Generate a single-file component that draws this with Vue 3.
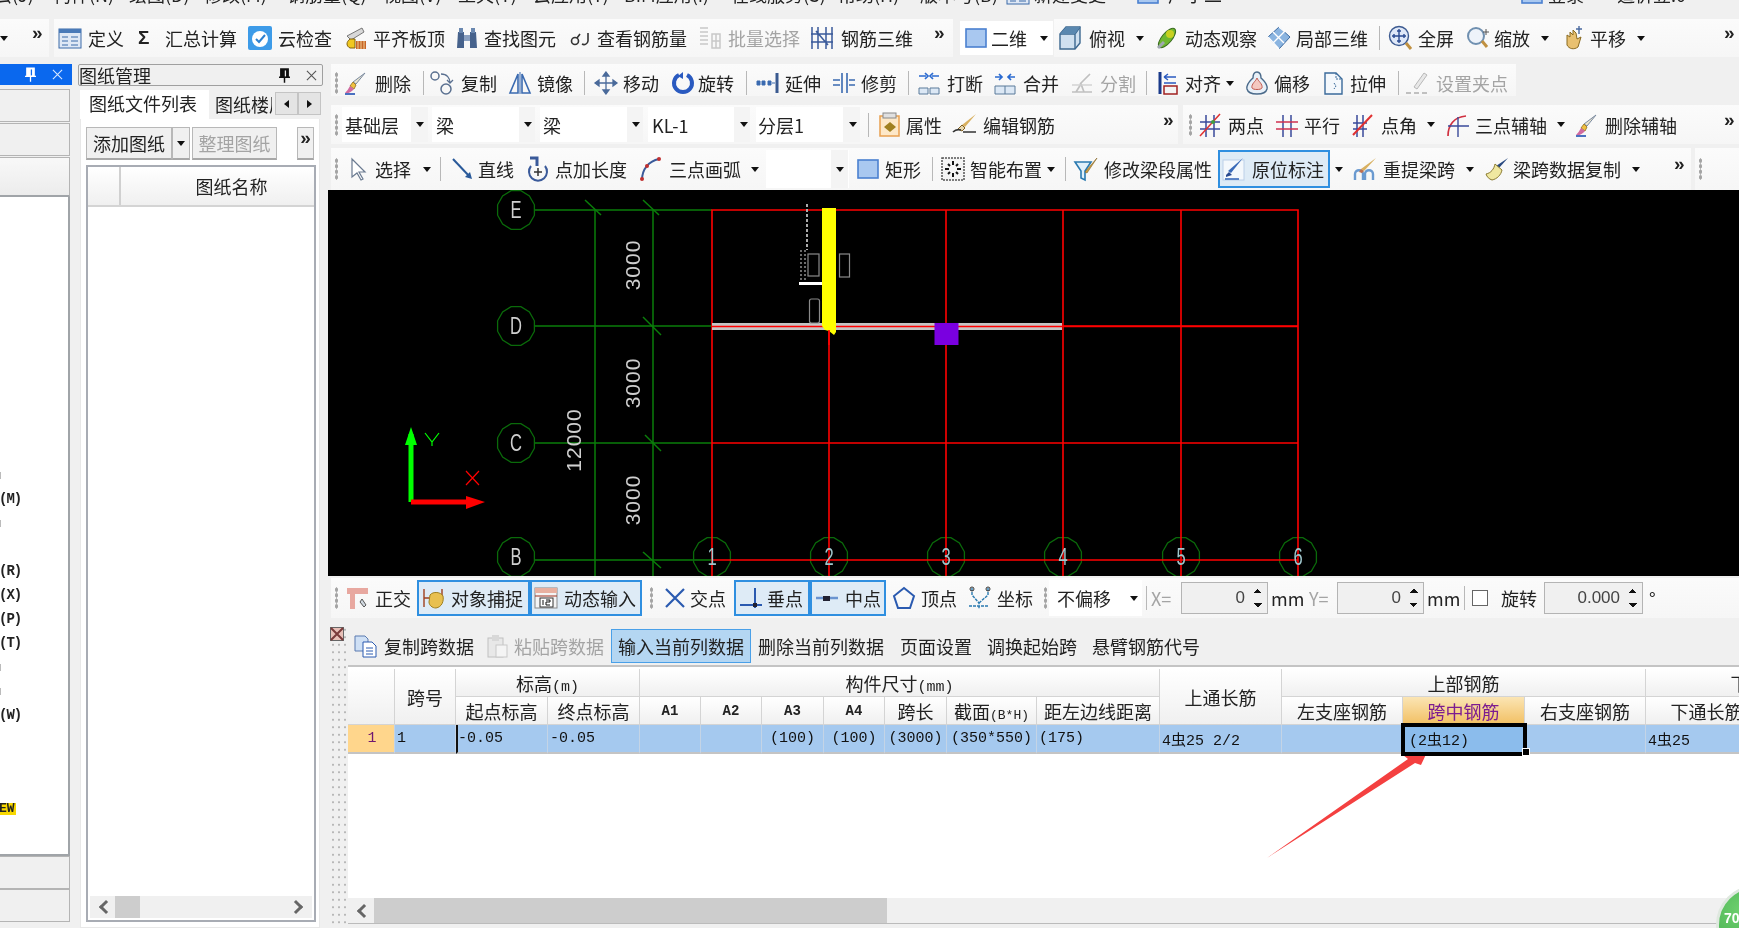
<script setup>
import { h } from 'vue'

const brush = '<path d="M21 2 L12 13 L9 11 Z" fill="#e8e4d0" stroke="#7a8aa0"/><path d="M9 11 L12 14 L10 18 L6 15 Z" fill="#f0c040" stroke="#a08030"/><path d="M6 15 L10 18 Q6 23 1 22 Q4 19 6 15Z" fill="#d06aa0"/><path d="M1 23h10" stroke="#4a70c0" stroke-width="2"/>'
const I = {
  def: '<rect x="1" y="3" width="22" height="19" fill="#dfe8f5" stroke="#3b6aa8"/><rect x="1" y="3" width="22" height="4" fill="#4a7ab8"/><path d="M4 11h6M4 15h6M4 19h6M13 11h7M13 15h7M13 19h7" stroke="#3b6aa8"/>',
  cloud: '<rect x="0" y="0" width="24" height="24" rx="2" fill="#3d9be8"/><circle cx="12" cy="13" r="8" fill="#fff"/><path d="M8 13l3 3 6-7" fill="none" stroke="#2c80d0" stroke-width="2"/>',
  align: '<path d="M3 10 L18 2 L20 6 L7 14Z" fill="#d8d8d8" stroke="#777"/><path d="M6 13c-4 3-4 7 0 9h5v-9z" fill="#f0c820" stroke="#806010"/><path d="M12 15h10v8H12z" fill="#c86428"/><path d="M14 15v8M17 15v8M20 15v8" stroke="#f0d090"/>',
  find: '<path d="M3 6h6v16H2zM15 6h6l1 16h-7z" fill="#46628c"/><rect x="9" y="9" width="6" height="6" fill="#8aa0c0"/><rect x="4" y="2" width="4" height="5" fill="#6a88b0"/><rect x="16" y="2" width="4" height="5" fill="#6a88b0"/>',
  see: '<circle cx="6" cy="15" r="3.5" fill="none" stroke="#333" stroke-width="1.6"/><path d="M8 12L11 8M19 7v8a4 4 0 0 1-6 3" fill="none" stroke="#333" stroke-width="1.6"/>',
  batch: '<path d="M2 2h8M2 6h8M2 10h8M2 14h8M2 18h8M14 8h8v14h-8zM14 15h8M18 8v14" fill="none" stroke="#c8c8c8" stroke-width="1.5"/>',
  rebar: '<path d="M2 1v22M8 1v22M16 1v22M22 1v22M1 8h22M1 16h22M6 5l12 14" fill="none" stroke="#3a5a9a" stroke-width="1.5"/>',
  sq: '<rect x="2" y="3" width="20" height="18" fill="#a9c8f0" stroke="#4a80d0" stroke-width="1.6"/>',
  top: '<path d="M2 8L8 1h14v16l-5 6H2z" fill="#cfe0f0" stroke="#3c6890" stroke-width="1.4"/><path d="M2 8h15v15M17 8l5-7" fill="none" stroke="#3c6890" stroke-width="1.4"/><path d="M8 1h14l-5 7H2z" fill="#5a88b0"/>',
  orbit: '<ellipse cx="12" cy="12" rx="12" ry="5" transform="rotate(-50 12 12)" fill="#70b830" stroke="#3a6a20"/><circle cx="15" cy="8" r="4" fill="#c8d020"/><path d="M3 22l6-6" stroke="#a0a8b0" stroke-width="3"/>',
  local: '<path d="M12 1L23 11 12 23 1 11z" fill="#8ab4e0" stroke="#3c6aa0"/><path d="M6 6l11 11M12 1l6 5M6 17L18 5M1 11l11 12" stroke="#fff" stroke-width="1.4"/>',
  full: '<circle cx="11" cy="10" r="9.5" fill="#dfe8f8" stroke="#3c5a90" stroke-width="1.4"/><path d="M11 3v14M4 10h14M9 5h4M9 15h4M6 8v4M16 8v4" stroke="#2a4a90" stroke-width="1.4"/><path d="M18 17l5 6" stroke="#c09040" stroke-width="3"/>',
  zoom: '<circle cx="9" cy="10" r="8" fill="#eef3fa" stroke="#7090b0" stroke-width="2"/><path d="M15 15l5 6" stroke="#c09040" stroke-width="3"/><path d="M19 3v6M16 6h6" stroke="#555"/>',
  pan: '<path d="M5 13V9l3 2V6l3 3V4l3 3 1 6 4-2-3 10c-4 3-9 2-11-2z" fill="#e8c070" stroke="#8a6a20"/><path d="M17 0v8M14 3h6" stroke="#4a6aa0" stroke-width="1.4"/>',
  del: brush,
  copy: '<circle cx="5" cy="5" r="4" fill="none" stroke="#5a7090" stroke-width="1.5"/><circle cx="16" cy="18" r="5" fill="none" stroke="#5a7090" stroke-width="1.5"/><path d="M11 3c6 0 9 4 9 9M17 9l3 3 3-3" fill="none" stroke="#5a7090" stroke-width="1.3"/>',
  mirror: '<path d="M10 3L2 22h8zM14 3l8 19h-8z" fill="none" stroke="#3a6ab0" stroke-width="1.6"/><path d="M12 1v22" stroke="#3a6ab0"/>',
  move: '<path d="M12 1v22M1 12h22M12 1l-3 4h6zM12 23l-3-4h6zM1 12l4-3v6zM23 12l-4-3v6z" fill="#4a6a9a" stroke="#4a6a9a" stroke-width="1.3"/>',
  rot: '<path d="M8 4a9 9 0 1 0 8 0" fill="none" stroke="#2a5ac0" stroke-width="4"/><path d="M12 1v7l-5-3z" fill="#2a5ac0"/>',
  ext: '<path d="M1 10h3v4H1zM6 10h3v4H6zM12 10h3v4h-3zM16 12h3" fill="#3a6ab0" stroke="#3a6ab0"/><path d="M21 2v20" stroke="#3a5a90" stroke-width="3"/>',
  trim: '<path d="M10 2v20M15 2v20" stroke="#3a6ab0" stroke-width="1.6"/><path d="M1 9h7M1 14h7M17 9h6M17 14h6" stroke="#3a6ab0" stroke-width="1.6"/>',
  brk: '<path d="M2 17h9v6H2zM13 17h9v6h-9z" fill="#dce8f5" stroke="#5a7a9a"/><path d="M2 5h7M15 5h7M8 2l3 3-3 3M16 2l-3 3 3 3" fill="none" stroke="#2a6ad0" stroke-width="1.7"/>',
  merge: '<path d="M2 15h20v8H2zM12 15v8" fill="#dce8f5" stroke="#5a7a9a"/><path d="M2 6h7M15 6h7M6 3l3 3-3 3M18 3l-3 3 3 3" fill="none" stroke="#2a6ad0" stroke-width="1.7"/>',
  split: '<path d="M2 21h20M6 21l5-8 3 8M10 13L20 3" fill="none" stroke="#c0c0c0" stroke-width="1.7"/><path d="M2 14h20" stroke="#d0d0d0" stroke-width="1.4"/>',
  alignb: '<path d="M3 1v22" stroke="#1a3a8a" stroke-width="3"/><rect x="7" y="15" width="13" height="8" fill="#f4f4f4" stroke="#a02020" stroke-width="1.5"/><path d="M7 6h12M7 6l4-3M7 6l4 3M7 12h12" stroke="#2a5ac0" stroke-width="1.4" fill="none"/>',
  offs: '<path d="M12 1c-3 0-4 3-4 6-3 3-7 6-6 11 1 4 5 5 10 5s9-1 10-5c1-5-3-8-6-11 0-3-1-6-4-6z" fill="#e8f0f8" stroke="#4a6a8a" stroke-width="1.4"/><path d="M12 7c-1 3-6 6-5 10 1 2 9 2 10 0 1-4-4-7-5-10z" fill="#f4c8c0" stroke="#c05a50"/>',
  str: '<path d="M3 2h11l6 6v15H3z" fill="#f4f8fc" stroke="#3a6a9a" stroke-width="1.4"/><path d="M14 2v6h6M12 12l2 3-2 3" fill="none" stroke="#3a6a9a" stroke-dasharray="2 1"/>',
  grip2: '<path d="M9 16L19 2l3 2L12 18z" fill="#e8e8e8" stroke="#b8b8b8"/><path d="M1 22h5M9 22h5M17 22h5" stroke="#c0c0c0" stroke-width="2"/>',
  prop: '<rect x="2" y="3" width="19" height="20" fill="#fde8c8" stroke="#e8a050" stroke-width="1.5"/><rect x="5" y="0" width="13" height="5" fill="#e0e0e0" stroke="#888"/><path d="M6 14l6-5 6 5-6 5z" fill="#a08020"/>',
  edit: '<path d="M23 1l-11 13-3-2z" fill="#d8b060"/><path d="M9 12l3 3-3 3-4-2z" fill="#e8d8b0" stroke="#806020"/><path d="M0 19c3-3 5-3 8-2M10 19h13" stroke="#333" stroke-width="1.7" fill="none"/>',
  two: '<path d="M8 2v22M16 2v22M2 9h20M2 16h20" stroke="#3a4a9a" stroke-width="1.5"/><path d="M2 23L22 1" stroke="#e03030" stroke-width="1.5"/><circle cx="15" cy="9" r="2" fill="#40a040"/>',
  par: '<path d="M8 2v22M16 2v22" stroke="#3a4a9a" stroke-width="1.5"/><path d="M1 9h22M1 16h22" stroke="#d03050" stroke-width="1.5"/>',
  ang: '<path d="M5 2v22M11 2v22M1 10h14M1 16h14" stroke="#3a4a9a" stroke-width="1.5"/><path d="M1 22L20 2" stroke="#e03030" stroke-width="2"/>',
  arc3: '<path d="M2 23C2 12 8 4 20 3" fill="none" stroke="#d03040" stroke-width="1.7"/><path d="M12 4v20M2 13h21" stroke="#3a4a9a" stroke-width="1.4"/>',
  delax: brush,
  sel: '<path d="M5 2v18l5-4 4 7 2-1-4-7h6z" fill="#fff" stroke="#6a7a90" stroke-width="1.2"/>',
  line: '<path d="M2 2L19 20" stroke="#2a5a9a" stroke-width="2"/><path d="M21 22l-7-2 5-5z" fill="#2a5a9a"/>',
  plen: '<path d="M5 9a9 9 0 1 0 14 0" fill="none" stroke="#3a5a9a" stroke-width="2"/><path d="M12 11v8M8 15h8" stroke="#333" stroke-width="1.5"/><path d="M4 1h7v8" fill="none" stroke="#3a5a9a" stroke-width="3"/>',
  arc: '<path d="M3 23C3 12 10 4 20 2" fill="none" stroke="#3a5a9a" stroke-width="2"/><circle cx="3" cy="22" r="2" fill="#c03030"/><circle cx="8" cy="9" r="2" fill="#c03030"/><circle cx="20" cy="2" r="2" fill="#c03030"/>',
  smart: '<rect x="1" y="1" width="22" height="22" fill="#f4f4f4" stroke="#555" stroke-dasharray="2 1" stroke-width="1.5"/><path d="M12 4v4M12 16v4M4 12h4M16 12h4M7 7l2 2M17 7l-2 2M7 17l2-2M17 17l-2-2" stroke="#111" stroke-width="2"/>',
  modify: '<path d="M1 5h16l-6 9v9l-4-2v-7z" fill="#e0f0fa" stroke="#2a7ab0" stroke-width="1.6"/><path d="M23 1L13 16l-2-1z" fill="#d0a040" stroke="#806020" stroke-width=".6"/>',
  mark: '<rect x="1" y="3" width="21" height="20" fill="#f4f8fc" stroke="#bcd0e8"/><path d="M21 1L9 16l-3-2z" fill="#3a6ab8"/><path d="M4 18l3-3 3 3-6 2z" fill="#2a4a90"/><path d="M3 22h14" stroke="#3a6ab8" stroke-width="1.6"/>',
  re: '<path d="M2 23v-6c0-5 8-5 8 0v6M12 23v-6c0-5 8-5 8 0v6" fill="none" stroke="#6a9ad0" stroke-width="2.4"/><path d="M23 1L11 14l-3-2z" fill="#d8b060"/><path d="M8 12l3 2-2 2-3-1z" fill="#c07050"/>',
  cp: '<path d="M23 1l-9 10-3-2z" fill="#2a4a80"/><path d="M10 7l7 6c-1 5-5 9-10 10-3-1-5-3-6-6 5-1 8-5 9-10z" fill="#f0e8a0" stroke="#8a7a30"/>',
  ortho: '<path d="M2 2h21v6h-21zM5 8h5v15H5z" fill="#e8a8a0"/><path d="M17 13l4 6-2 2-4-5z" fill="#d0d8e0" stroke="#555"/>',
  snap: '<path d="M2 3v18M20 3v8M2 12h18" stroke="#a04020" stroke-width="1.4"/><path d="M8 9c3-4 11-3 13 1 1 5-1 11-7 12-4 0-7-3-7-6z" fill="#e8c050" stroke="#a08020"/>',
  dyn: '<rect x="1" y="2" width="22" height="20" fill="#f4f4f4" stroke="#888"/><rect x="1" y="2" width="22" height="5" fill="#e8b0a0"/><path d="M1 10h22" stroke="#a03020"/><rect x="6" y="12" width="13" height="9" fill="#fff" stroke="#333"/><path d="M9 14v5M12 14h4v2h-4v3h4" stroke="#111" fill="none"/>',
  cross: '<path d="M3 3l18 18M21 3L3 21" stroke="#2a5ab0" stroke-width="2.2"/>',
  perp: '<path d="M1 19h22M16 2v20" stroke="#2a5ab0" stroke-width="2"/><rect x="14" y="17" width="4" height="4" fill="#223"/>',
  mid: '<path d="M1 12h22" stroke="#6a94d0" stroke-width="2.5"/><rect x="8" y="10" width="7" height="5" fill="#223"/>',
  vert: '<path d="M12 2L22 10 18 22H6L2 10z" fill="none" stroke="#2a5ab0" stroke-width="2"/>',
  coord: '<path d="M4 2v7l7 8v6M20 2v7l-9 8M1 20h20" fill="none" stroke="#2a7ab0" stroke-width="1.4" stroke-dasharray="3 1"/><circle cx="4" cy="3" r="2" fill="none" stroke="#333"/><circle cx="20" cy="3" r="2" fill="none" stroke="#333"/>',
  cpy: '<path d="M2 2h10l3 3v12H2z" fill="#cfe0f5" stroke="#5a7ab0"/><path d="M10 8h9l4 4v11H10z" fill="#fff" stroke="#2a5ab0"/><path d="M13 14h7M13 17h7M13 20h7" stroke="#2a5ab0"/>',
  pst: '<rect x="3" y="4" width="15" height="19" fill="#e8e8e8" stroke="#c0c0c0"/><rect x="7" y="1" width="7" height="6" fill="#d8d8d8"/><rect x="11" y="11" width="11" height="12" fill="#f4f4f4" stroke="#c8c8c8"/>'
}

const Bar = (p) => h('div', { class: 'bar' }, p.cells.map((c, i) => {
  const n = p.cells[i + 1]
  const style = { width: (n ? n[0] - c[0] : 60) + 'px' }
  if (i === 0) style.marginLeft = (c[0] - (p.from || 0)) + 'px'
  const [, k, a, b] = c
  let inner
  if (k === 'i') inner = h('svg', { class: 'ic', viewBox: '0 0 24 24', innerHTML: I[a] })
  else if (k === 't') inner = h('span', { class: 'tx' }, a)
  else if (k === 'g') inner = h('span', { class: 'tx off' }, a)
  else if (k === 'b') inner = h('span', { class: 'tx sig' }, a)
  else if (k === 'arr') inner = h('i', { class: 'arr' })
  else if (k === 'more') inner = h('span', { class: 'more' }, '»')
  else if (k === 'grip') inner = h('i', { class: 'grip' })
  else if (k === 'sep') inner = h('i', { class: 'sep' })
  else if (k === 'bg') inner = h('div', { class: ['ov', b], style: { width: a + 'px' } })
  else if (k === 'inp') inner = h('div', { class: 'inp', style: { width: a + 'px' } }, [h('span', b), h('i', { class: 'spin' })])
  return h('div', { class: 'cell', style }, [inner])
}))

const menu = [[-6,'t','云(J)'],[53,'t','构件(N)'],[129,'t','绘图(D)'],[204,'t','修改(M)'],[287,'t','钢筋量(Q)'],[383,'t','视图(V)'],[458,'t','工具(T)'],[533,'t','云应用(Y)'],[624,'t','BIM应用(I)'],[731,'t','在线服务(S)'],[838,'t','帮助(H)'],[920,'t','版本号(B)'],[1006,'i','def'],[1034,'t','新建变更'],[1136,'i','sq'],[1168,'t','广小二'],[1520,'i','sq'],[1548,'t','登录'],[1617,'t','造价豆:0']]

const r1 = [[0,'bg',49,'seg'],[0,'arr'],[32,'more'],[54,'bg',899,'seg'],[58,'i','def'],[88,'t','定义'],[138,'b','Σ'],[165,'t','汇总计算'],[248,'i','cloud'],[278,'t','云检查'],[344,'i','align'],[373,'t','平齐板顶'],[455,'i','find'],[484,'t','查找图元'],[569,'i','see'],[597,'t','查看钢筋量'],[698,'i','batch'],[728,'g','批量选择'],[810,'i','rebar'],[841,'t','钢筋三维'],[934,'more'],[960,'bg',93,'wh'],[964,'i','sq'],[991,'t','二维'],[1040,'arr'],[1054,'bg',685,'seg'],[1058,'i','top'],[1089,'t','俯视'],[1136,'arr'],[1155,'i','orbit'],[1185,'t','动态观察'],[1267,'i','local'],[1296,'t','局部三维'],[1379,'sep'],[1388,'i','full'],[1418,'t','全屏'],[1467,'i','zoom'],[1494,'t','缩放'],[1541,'arr'],[1562,'i','pan'],[1590,'t','平移'],[1637,'arr'],[1724,'more']]

const r2 = [[331,'bg',1185,'seg short'],[335,'grip'],[344,'i','del'],[375,'t','删除'],[423,'sep'],[430,'i','copy'],[461,'t','复制'],[508,'i','mirror'],[537,'t','镜像'],[584,'sep'],[594,'i','move'],[623,'t','移动'],[671,'i','rot'],[698,'t','旋转'],[746,'sep'],[756,'i','ext'],[785,'t','延伸'],[832,'i','trim'],[861,'t','修剪'],[908,'sep'],[917,'i','brk'],[947,'t','打断'],[993,'i','merge'],[1023,'t','合并'],[1070,'i','split'],[1100,'g','分割'],[1146,'sep'],[1157,'i','alignb'],[1185,'t','对齐'],[1226,'arr'],[1245,'i','offs'],[1274,'t','偏移'],[1322,'i','str'],[1350,'t','拉伸'],[1398,'sep'],[1405,'i','grip2'],[1436,'g','设置夹点']]

const r3 = [[331,'bg',847,'seg'],[335,'grip'],[342,'bg',86,'wh'],[345,'t','基础层'],[411,'bg',17,'cbtn'],[416,'arr'],[432,'bg',103,'wh'],[436,'t','梁'],[519,'bg',16,'cbtn'],[524,'arr'],[540,'bg',103,'wh'],[543,'t','梁'],[627,'bg',16,'cbtn'],[632,'arr'],[648,'bg',102,'wh'],[652,'t','KL-1'],[734,'bg',16,'cbtn'],[740,'arr'],[756,'bg',104,'wh'],[758,'t','分层1'],[843,'bg',17,'cbtn'],[849,'arr'],[868,'sep'],[878,'i','prop'],[906,'t','属性'],[953,'i','edit'],[983,'t','编辑钢筋'],[1163,'more'],[1183,'bg',556,'seg'],[1189,'grip'],[1198,'i','two'],[1228,'t','两点'],[1275,'i','par'],[1304,'t','平行'],[1352,'i','ang'],[1381,'t','点角'],[1427,'arr'],[1446,'i','arc3'],[1475,'t','三点辅轴'],[1557,'arr'],[1575,'i','delax'],[1605,'t','删除辅轴'],[1724,'more']]

const r4 = [[331,'bg',1360,'seg'],[335,'grip'],[347,'i','sel'],[375,'t','选择'],[423,'arr'],[440,'sep'],[451,'i','line'],[478,'t','直线'],[526,'i','plen'],[555,'t','点加长度'],[639,'i','arc'],[669,'t','三点画弧'],[751,'arr'],[766,'bg',83,'wh'],[831,'bg',17,'cbtn'],[836,'arr'],[856,'i','sq'],[885,'t','矩形'],[932,'sep'],[941,'i','smart'],[970,'t','智能布置'],[1047,'arr'],[1065,'sep'],[1074,'i','modify'],[1104,'t','修改梁段属性'],[1218,'bg',112,'act'],[1222,'i','mark'],[1252,'t','原位标注'],[1335,'arr'],[1353,'i','re'],[1383,'t','重提梁跨'],[1466,'arr'],[1485,'i','cp'],[1513,'t','梁跨数据复制'],[1632,'arr'],[1674,'more'],[1695,'bg',44,'seg'],[1699,'grip']]

const r5 = [[331,'bg',1408,'seg'],[335,'grip'],[345,'i','ortho'],[375,'t','正交'],[417,'bg',113,'act'],[422,'i','snap'],[451,'t','对象捕捉'],[530,'bg',112,'act'],[534,'i','dyn'],[564,'t','动态输入'],[650,'grip'],[663,'i','cross'],[690,'t','交点'],[734,'bg',76,'act'],[739,'i','perp'],[767,'t','垂点'],[810,'bg',76,'act'],[815,'i','mid'],[845,'t','中点'],[892,'i','vert'],[921,'t','顶点'],[968,'i','coord'],[997,'t','坐标'],[1044,'grip'],[1049,'bg',93,'wh'],[1057,'t','不偏移'],[1130,'arr'],[1146,'sep'],[1151,'g','X='],[1181,'inp',87,'0'],[1271,'t','mm'],[1309,'g','Y='],[1337,'inp',87,'0'],[1427,'t','mm'],[1464,'sep'],[1472,'bg',16,'chk'],[1501,'t','旋转'],[1544,'inp',99,'0.000'],[1649,'t','°']]

const r6 = [[353,'i','cpy'],[384,'t','复制跨数据'],[485,'i','pst'],[514,'g','粘贴跨数据'],[611,'bg',140,'act2'],[618,'t','输入当前列数据'],[758,'t','删除当前列数据'],[900,'t','页面设置'],[987,'t','调换起始跨'],[1092,'t','悬臂钢筋代号']]

const leftRows = ['tick', '(M)', 'tick', '', '(R)', '(X)', '(P)', '(T)', 'tick', 'tick', '(W)', '', '', '', 'new']

const vAxes = [['E', 210], ['D', 326], ['C', 443], ['B', 557]]
const hAxes = [['1', 712], ['2', 829], ['3', 946], ['4', 1063], ['5', 1181], ['6', 1298]]
const ticks = [[585,200,601,215],[643,200,659,215],[643,317,661,335],[645,435,661,451],[643,552,661,568]]
const dims = [[633,265,'3000'],[633,383,'3000'],[633,500,'3000'],[574,440,'12000']]
const poly = (cx, cy) => Array.from({ length: 12 }, (_, i) => {
  const a = (i + 0.5) * Math.PI / 6
  return `${(cx + 19 * Math.cos(a)).toFixed(1)},${(cy + 20 * Math.sin(a)).toFixed(1)}`
}).join(' ')

const subs = ['A1','A2','A3','A4']
</script>

<template>
  <div class="app">
    <div class="menu"><div class="menu-in"><Bar :cells="menu" /></div></div>
    <div class="row r1"><Bar :cells="r1" /></div>
    <div class="main">
      <aside class="left">
        <div class="lhead">
          <svg class="pin" viewBox="0 0 12 16"><path d="M2 1h8v9H2zM0 10h12M6 10v6" fill="#fff" stroke="#fff" stroke-width="1.4" /><path d="M7 2.5v6.5" stroke="#0a68ee" stroke-width="1.4" /></svg>
          <svg class="xic" viewBox="0 0 12 12"><path d="M1 1l10 10M11 1L1 11" stroke="#d8e8ff" stroke-width="1.2" /></svg>
        </div>
        <div class="lbtn b1"></div>
        <div class="lbtn b2"></div>
        <div class="lbtn b3"></div>
        <div class="llist">
          <div v-for="(r, i) in leftRows" :key="i" class="lrow">
            <i v-if="r === 'tick'" class="ltick"></i>
            <span v-else-if="r === 'new'" class="lnew">EW</span>
            <span v-else-if="r" class="lkey">{{ r }}</span>
          </div>
        </div>
        <div class="lbtn b4"></div>
        <div class="lbtn b4"></div>
      </aside>

      <section class="draw">
        <div class="dtitle">
          <span>图纸管理</span>
          <svg class="dpin" viewBox="0 0 12 16"><path d="M2 1h8v9H2zM0 10h12M6 10v6" fill="#111" stroke="#111" stroke-width="1.6" /><path d="M7 2.5v6.5" stroke="#eee" stroke-width="1.4" /></svg>
          <svg class="dx" viewBox="0 0 12 12"><path d="M1 1l10 10M11 1L1 11" stroke="#555" stroke-width="1.2" /></svg>
        </div>
        <div class="dtabs">
          <div class="tab on">图纸文件列表</div>
          <div class="tab">图纸楼层</div>
          <div class="nav"><i class="tl"></i></div>
          <div class="nav"><i class="tr"></i></div>
        </div>
        <div class="dbody">
          <div class="dtools">
            <div class="dbtn w1">添加图纸</div>
            <div class="dbtn w2"><i class="arr"></i></div>
            <div class="dbtn w3 off">整理图纸</div>
            <div class="dbtn w4"><span class="more">»</span></div>
          </div>
          <div class="dtable">
            <div class="dhead"><div class="dh0"></div><div class="dh1">图纸名称</div></div>
            <div class="dfill"></div>
            <div class="dscroll"><i class="chev l"></i><i class="dthumb"></i><i class="chev r"></i></div>
          </div>
        </div>
      </section>

      <section class="work">
        <div class="row r2"><Bar :cells="r2" :from="328" /></div>
        <div class="row r3"><Bar :cells="r3" :from="328" /></div>
        <div class="row r4"><Bar :cells="r4" :from="328" /></div>

        <svg class="cad" viewBox="328 190 1411 386">
          <g stroke="#0a7e0a" stroke-width="1.5" fill="none">
            <path v-for="a in vAxes" :key="a[0]" :d="`M535 ${a[1] === 557 ? 560 : a[1]}H712`" />
            <path d="M595 210V576M653 210V576" />
            <path v-for="(t, i) in ticks" :key="i" :d="`M${t[0]} ${t[1]}L${t[2]} ${t[3]}`" />
          </g>
          <g stroke="#0a6a0a" stroke-width="1.3" fill="none">
            <polygon v-for="a in vAxes" :key="a[0]" :points="poly(516, a[1])" />
            <polygon v-for="a in hAxes" :key="a[0]" :points="poly(a[1], 557)" />
          </g>
          <path d="M712 210H1298V560H712ZM712 210V576M712 326H1298M712 443H1298M829 326V576M946 210V576M1063 210V576M1181 210V576M1298 210V576" stroke="#f00" stroke-width="1.6" fill="none" />
          <rect x="712" y="323" width="350" height="7" fill="#c4c4c4" />
          <path d="M712 326.5H1298" stroke="#f00" stroke-width="1.4" />
          <rect x="934.5" y="323" width="24" height="22" fill="#7a00e0" />
          <path d="M822 208H836V332L834 335 829 331 825 330 822 326Z" fill="#ff0" />
          <path d="M829 330V345" stroke="#f00" stroke-width="1.6" />
          <g fill="none" stroke="#8a8a8a" stroke-width="1.2">
            <rect x="839.5" y="254" width="10" height="23" />
            <rect x="809.5" y="299" width="10" height="24" rx="2" />
            <rect x="808" y="254" width="11" height="22" />
          </g>
          <path d="M807 204V250" stroke="#aaa" stroke-width="2" stroke-dasharray="3 2" />
          <path d="M801 250V280M805 250V280" stroke="#999" stroke-width="1.4" stroke-dasharray="2 2" />
          <rect x="799" y="282" width="23" height="3" fill="#fff" />
          <g class="cad-t" fill="#cfcfcf">
            <text v-for="a in vAxes" :key="a[0]" :transform="`translate(516 ${a[1] + 8}) scale(.72 1)`" text-anchor="middle" font-size="23">{{ a[0] }}</text>
          </g>
          <g class="cad-t" fill="#9fc6cc">
            <text v-for="a in hAxes" :key="a[0]" :transform="`translate(${a[1]} 565) scale(.72 1)`" text-anchor="middle" font-size="23">{{ a[0] }}</text>
          </g>
          <g class="cad-t" fill="#cfcfcf">
            <text v-for="(d, i) in dims" :key="i" :transform="`translate(${d[0] + 7} ${d[1]}) rotate(-90)`" text-anchor="middle" font-size="21" letter-spacing="1">{{ d[2] }}</text>
          </g>
          <path d="M411 434V502" stroke="#0f0" stroke-width="5" />
          <path d="M411 427L417 445H405Z" fill="#0f0" />
          <path d="M411 502H470" stroke="#f00" stroke-width="5" />
          <path d="M485 502L466 496V509Z" fill="#f00" />
          <path d="M425 433L432 442L439 433M432 442V446" stroke="#0f0" stroke-width="1.2" fill="none" />
          <path d="M466 471L479 485M479 471L466 485" stroke="#f00" stroke-width="1.2" />
        </svg>

        <div class="row r5"><Bar :cells="r5" :from="328" /></div>

        <div class="tpanel">
          <div class="tgrip">
            <svg class="tcorner" viewBox="0 0 14 14"><rect x=".5" y=".5" width="13" height="13" fill="#e8c0b8" stroke="#666" /><path d="M1 1l12 12M13 1L1 13" stroke="#7a3a3a" stroke-width="2" /></svg>
          </div>
          <div class="tmain">
            <div class="row r6"><Bar :cells="r6" :from="348" /></div>
            <div class="gridwrap">
              <div class="grid">
                <div class="hc rs2"></div>
                <div class="hc rs2">跨号</div>
                <div class="hc cs2"><span>标高<span class="mn">(m)</span></span></div>
                <div class="hc cs7"><span>构件尺寸<span class="mn">(mm)</span></span></div>
                <div class="hc rs2">上通长筋</div>
                <div class="hc cs3">上部钢筋</div>
                <div class="hc cs2">下部钢筋</div>
                <div class="hc">起点标高</div>
                <div class="hc">终点标高</div>
                <div v-for="s in subs" :key="s" class="hc mn bold">{{ s }}</div>
                <div class="hc">跨长</div>
                <div class="hc"><span>截面<span class="mn small">(B*H)</span></span></div>
                <div class="hc">距左边线距离</div>
                <div class="hc">左支座钢筋</div>
                <div class="hc sel">跨中钢筋</div>
                <div class="hc">右支座钢筋</div>
                <div class="hc">下通长筋</div>
                <div class="hc"></div>
                <div class="dc idx">1</div>
                <div class="dc">1</div>
                <div class="dc mark">-0.05</div>
                <div class="dc">-0.05</div>
                <div class="dc"></div>
                <div class="dc"></div>
                <div class="dc ctr">(100)</div>
                <div class="dc ctr">(100)</div>
                <div class="dc ctr">(3000)</div>
                <div class="dc ctr">(350*550)</div>
                <div class="dc">(175)</div>
                <div class="dc">4虫25 2/2</div>
                <div class="dc"></div>
                <div class="dc cur">(2虫12)<i class="handle"></i></div>
                <div class="dc"></div>
                <div class="dc">4虫25</div>
                <div class="dc"></div>
              </div>
            </div>
            <div class="hscroll"><i class="chev l"></i><i class="hthumb"></i></div>
          </div>
        </div>
      </section>
    </div>

    <svg class="arrow" viewBox="0 0 200 130">
      <path d="M0 120L141 21 136 17 162 10 154 27 148 25Z" fill="#f44040" />
    </svg>
    <div class="badge">70</div>
  </div>
</template>

<style scoped>
.app { position: relative; width: 1739px; height: 928px; overflow: hidden; background: #f0f0f0; display: flex; flex-direction: column; font-family: "Noto Sans CJK SC", "Liberation Sans", sans-serif; font-size: 18px; color: #222; filter: blur(0.35px); }
.menu { height: 19px; overflow: hidden; flex: none; }
.menu-in { margin-top: -19px; height: 26px; }
.row { flex: none; }
.r1 { height: 38px; }
.main { flex: 1; display: flex; min-height: 0; }

.left { width: 72px; flex: none; padding-top: 7px; display: flex; flex-direction: column; }
.lhead { height: 21px; background: #0a68ee; position: relative; flex: none; }
.pin { position: absolute; left: 25px; top: 3px; width: 11px; height: 15px; }
.xic { position: absolute; left: 52px; top: 5px; width: 11px; height: 11px; }
.lbtn { flex: none; width: 70px; box-sizing: border-box; border: 1px solid #b4b4b4; border-left: 0; background: #f0f0f0; }
.b1 { height: 33px; margin-top: 4px; }
.b2 { height: 33px; margin-top: 1px; }
.b3 { height: 40px; margin-top: 1px; background: linear-gradient(#f8f8f8, #ececec); border-bottom: 2px solid #a0a4a8; }
.b4 { height: 33px; }
.llist { height: 659px; flex: none; width: 70px; box-sizing: border-box; background: #fff; border-right: 2px solid #a0a4a8; border-bottom: 2px solid #a0a4a8; padding-top: 266px; }
.lrow { height: 24px; display: flex; align-items: center; overflow: hidden; }
.ltick { width: 1px; height: 7px; background: #bbb; }
.lkey { font: 700 14px "Liberation Mono", monospace; letter-spacing: -1px; margin-left: -1px; color: #222; }
.lnew { background: #f8d800; font: 700 13px "Liberation Mono", monospace; padding-right: 1px; color: #222; margin-left: -1px; line-height: 12px; position: relative; top: -2px; }

.draw { width: 250px; flex: none; margin-left: 6px; padding-top: 7px; display: flex; flex-direction: column; }
.dtitle { height: 22px; width: 245px; box-sizing: border-box; border: 1px solid #a0a0a0; border-radius: 2px; display: flex; align-items: center; position: relative; flex: none; }
.dpin { position: absolute; left: 200px; top: 3px; width: 11px; height: 15px; }
.dx { position: absolute; left: 227px; top: 5px; width: 11px; height: 11px; }
.dtabs { display: flex; margin-top: 4px; height: 29px; flex: none; padding-left: 2px; }
.tab { height: 29px; line-height: 29px; margin-right: 3px; overflow: hidden; white-space: nowrap; padding-left: 6px; width: 57px; }
.tab.on { width: 120px; background: #fff; padding-left: 9px; margin-right: 0; line-height: 26px; }
.nav { width: 23px; height: 23px; margin-top: 2px; background: #e4e4e4; border: 1px solid #c4c4c4; box-sizing: border-box; display: flex; align-items: center; justify-content: center; }
.tl { border: 4px solid transparent; border-right: 5px solid #111; border-left: 0; }
.tr { border: 4px solid transparent; border-left: 5px solid #111; border-right: 0; }
.dbody { width: 240px; margin-left: 2px; flex: 1; background: #fff; padding: 8px 3px 5px 5px; box-sizing: border-box; border: 1px solid #e8e8e8; border-top: 0; display: flex; flex-direction: column; }
.dtools { display: flex; height: 33px; flex: none; margin-bottom: 5px; }
.dbtn { box-sizing: border-box; background: #f0f0f0; border: 1px solid #b8b8b8; border-bottom: 2px solid #a8a8a8; display: flex; align-items: center; justify-content: center; white-space: nowrap; }
.w1 { width: 86px; }
.w2 { width: 18px; }
.w3 { width: 85px; margin-left: 2px; }
.w4 { width: 17px; margin-left: auto; margin-right: 2px; }
.off { color: #a4a4a4; }
.dtable { flex: 1; border: 2px solid #a8acb4; display: flex; flex-direction: column; min-height: 0; }
.dhead { display: flex; height: 38px; flex: none; border-bottom: 2px solid #d4d4d4; background: linear-gradient(#fff, #f0f0f0); }
.dh0 { width: 31px; border-right: 2px solid #d0d0d0; }
.dh1 { flex: 1; text-align: center; line-height: 38px; padding-left: 28px; }
.dfill { flex: 1; }
.dscroll { height: 22px; flex: none; background: #f0f0f0; margin: 0 2px 2px; display: flex; align-items: center; position: relative; }
.dthumb { position: absolute; left: 25px; width: 25px; height: 22px; background: #cdcdcd; }

.chev { width: 7px; height: 7px; border-left: 3px solid #666; border-bottom: 3px solid #666; position: absolute; }
.chev.l { left: 11px; transform: rotate(45deg); }
.chev.r { right: 11px; transform: rotate(225deg); }

.work { flex: none; width: 1411px; display: flex; flex-direction: column; }
.r2 { height: 38px; margin-top: 7px; }
.r3 { height: 39px; margin-top: 3px; }
.r4 { height: 42px; margin-top: 4px; }
.cad { display: block; width: 1411px; height: 386px; background: #000; flex: none; }
.cad-t { font-family: "Liberation Sans", sans-serif; }
.r5 { height: 40px; margin-top: 2px; }

.tpanel { flex: 1; display: flex; margin-top: 9px; min-height: 0; position: relative; }
.tgrip { width: 20px; flex: none; position: relative; background-image: radial-gradient(#b8b8b8 1px, transparent 1.2px); background-size: 6px 7.5px; background-position: 2px 14px; }
.tcorner { position: absolute; left: 2px; top: 0; width: 14px; height: 14px; }
.tmain { flex: 1; min-width: 0; display: flex; flex-direction: column; }
.r6 { height: 38px; }
.gridwrap { flex: 1; background: #fff; border-top: 2px solid #c4c4c4; overflow: hidden; padding-top: 2px; position: relative; }
.grid { display: grid; grid-template-columns: 47px 61px 92px 92px 61px 61px 62px 61px 62px 90px 123px 122px 121px 122px 121px 122px 120px; grid-template-rows: 28px 28px 29px; width: max-content; }
.hc { background: linear-gradient(#fff, #f0f0f0); border-right: 1px solid #d4d4d4; border-bottom: 1px solid #d4d4d4; display: flex; align-items: center; justify-content: center; white-space: nowrap; box-sizing: border-box; color: #222; }
.rs2 { grid-row: span 2; }
.cs2 { grid-column: span 2; }
.cs3 { grid-column: span 3; }
.cs7 { grid-column: span 7; }
.mn { font-family: "Liberation Mono", monospace; font-size: 15px; }
.small { font-size: 13px; }
.bold { font-weight: 700; font-size: 14px; }
.hc.sel { background: linear-gradient(#fbe5b4, #f2c064); color: #7c1c90; }
.dc { background: #a5c9ef; border-right: 1px solid #c4d4e6; border-bottom: 2px solid #c4c4c4; box-sizing: border-box; padding-left: 2px; display: flex; align-items: center; white-space: nowrap; font-family: "Liberation Mono", "Noto Sans CJK SC", monospace; font-size: 15px; color: #111; position: relative; }
.dc.ctr { justify-content: center; padding-left: 0; }
.dc.idx { background: #ffd68c; justify-content: center; color: #701870; }
.dc.mark { border-left: 2px solid #111; padding-left: 0; }
.dc.cur { background: #8bbcec; outline: 4px solid #000; outline-offset: -2px; padding-left: 6px; z-index: 1; }
.handle { position: absolute; right: -6px; bottom: -4px; width: 6px; height: 6px; background: #000; border: 1px solid #fff; }
.hscroll { height: 25px; flex: none; background: #f0f0f0; border-bottom: 1px solid #bbb; margin-bottom: 4px; position: relative; display: flex; align-items: center; }
.hthumb { position: absolute; left: 26px; width: 513px; height: 25px; background: #cdcdcd; }

.arrow { position: absolute; left: 1267px; top: 738px; width: 200px; height: 130px; }
.badge { position: absolute; left: 1716px; top: 885px; width: 80px; height: 80px; box-sizing: border-box; border-radius: 50%; border: 3px solid #dfe8df; background: radial-gradient(circle at 30% 30%, #6ed06e, #2e9a3e); color: #fff; font: 700 14px "Liberation Sans", sans-serif; padding: 22px 0 0 5px; }
</style>

<style>
.bar { display: flex; align-items: center; height: 100%; white-space: nowrap; }
.cell { flex: none; position: relative; height: 100%; display: flex; align-items: center; }
.ic { width: 24px; height: 24px; flex: none; display: block; overflow: visible; }
.tx { color: #222; }
.tx.off { color: #a4a4a4; }
.tx.sig { font: 700 19px "Liberation Sans", sans-serif; }
.arr { display: inline-block; width: 0; height: 0; border: 4px solid transparent; border-top: 5px solid #111; border-bottom: 0; }
.more { font: 700 19px "Liberation Sans", sans-serif; color: #222; position: relative; top: -5px; }
.grip { width: 3px; height: 22px; background-image: radial-gradient(#a4a4a4 1.2px, transparent 1.4px); background-size: 3px 5.5px; }
.sep { width: 1px; height: 24px; background: #b8b8b8; }
.ov { position: absolute; left: 0; top: 0; bottom: 0; }
.ov.seg { background: linear-gradient(#fbfbfb, #f6f6f6); }
.ov.short { bottom: 6px; }
.ov.wh { background: #fff; top: 2px; bottom: 2px; }
.ov.cbtn { background: #f4f4f4; top: 2px; bottom: 2px; }
.ov.act { background: #deebf6; border: 2px solid #2f8fe0; box-sizing: border-box; top: 2px; bottom: 2px; }
.ov.act2 { background: #b4d6f2; border: 1px solid #4aa0e8; box-sizing: border-box; top: 2px; bottom: 2px; }
.ov.chk { background: #fff; border: 1px solid #666; box-sizing: border-box; height: 16px; top: 12px; bottom: auto; }
.inp { position: absolute; left: 0; top: 4px; bottom: 4px; box-sizing: border-box; border: 1px solid #b4b4b4; background: #f0f0f0; display: flex; align-items: center; justify-content: flex-end; padding-right: 22px; font: 17px "Liberation Sans", sans-serif; color: #444; }
.spin { position: absolute; right: 5px; top: 6px; width: 8px; height: 18px; background:
  linear-gradient(135deg, transparent 50%, #111 50%) 0 0/4px 4px no-repeat,
  linear-gradient(225deg, transparent 50%, #111 50%) 4px 0/4px 4px no-repeat,
  linear-gradient(45deg, transparent 50%, #111 50%) 0 14px/4px 4px no-repeat,
  linear-gradient(315deg, transparent 50%, #111 50%) 4px 14px/4px 4px no-repeat; }
</style>
